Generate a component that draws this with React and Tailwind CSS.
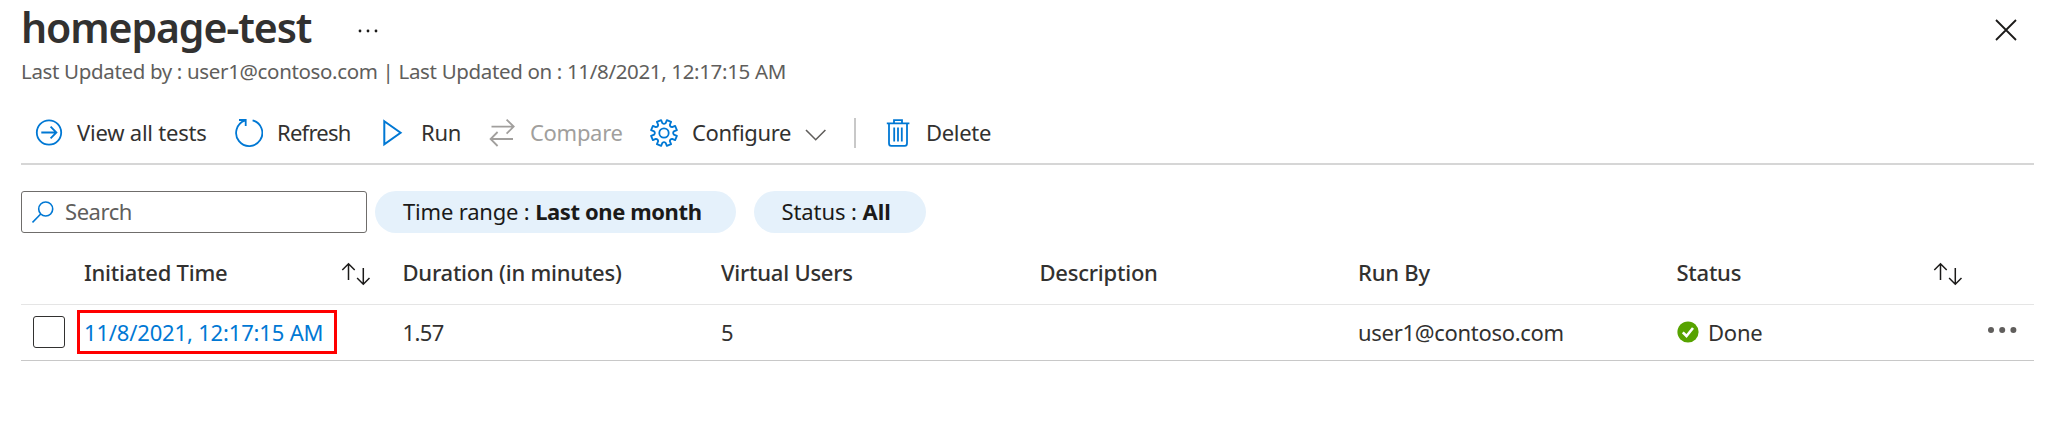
const blue = "#0078d4";

function Icon({ box, className = "", color = blue, width = 1.8, children }) {
  const [, , w, h] = box.split(" ");
  return (
    <svg
      viewBox={box}
      width={w}
      height={h}
      fill="none"
      stroke={color}
      strokeWidth={width}
      className={"block shrink-0 " + className}
      aria-hidden="true"
    >
      {children}
    </svg>
  );
}

function gearPath() {
  const pts = [];
  const n = 8;
  for (let i = 0; i < n; i++) {
    const c = (i * 360) / n + 22.5;
    [[-13, 10], [-10, 13.2], [10, 13.2], [13, 10]].forEach(([d, r]) => {
      const a = ((c + d) * Math.PI) / 180;
      pts.push([14 + r * Math.cos(a), 14 + r * Math.sin(a)]);
    });
  }
  let d = "M" + pts[0].map((v) => v.toFixed(2)).join(" ");
  for (let i = 0; i < n; i++) {
    const p = pts.slice(i * 4, i * 4 + 4).map((q) => q.map((v) => v.toFixed(2)).join(" "));
    if (i > 0) d += "A2.6 2.6 0 0 0 " + p[0];
    d += "L" + p[1] + "L" + p[2] + "L" + p[3];
  }
  return d + "A2.6 2.6 0 0 0 " + pts[0].map((v) => v.toFixed(2)).join(" ") + "Z";
}

function SortArrows({ className = "" }) {
  return (
    <Icon box="0 0 30 24" color="#1b1a19" width={1.5} className={className}>
      <path d="M7.5 18V1.8M1.3 8L7.5 1.8L13.7 8M22.3 6V22.2M16.1 16L22.3 22.2L28.5 16" />
    </Icon>
  );
}

function Command({ className, gap, text, textClass, children }) {
  return (
    <button className={"flex shrink-0 items-center text-left " + className}>
      {children}
      <span className={"mb-[2px] " + gap + " " + textClass}>{text}</span>
    </button>
  );
}

export default function App() {
  return (
    <main className="h-[446px] w-full overflow-hidden bg-white pr-[25px] pl-[21px] font-['Noto_Sans','Open_Sans',sans-serif] text-[22px] leading-[30px] font-normal whitespace-nowrap text-[#323130]">
      <header>
        <div className="flex h-[54px] items-center">
          <h1 className="w-[334px] text-[41px] leading-[54px] font-semibold tracking-[-1.1px]">homepage-test</h1>
          <Icon box="0 0 24 8" color="none" className="mt-[7px]">
            <g fill="#1b1a19">
              <circle cx="5" cy="4" r="1.4" />
              <circle cx="13" cy="4" r="1.4" />
              <circle cx="21" cy="4" r="1.4" />
            </g>
          </Icon>
          <Icon box="0 0 24 24" color="#1b1a19" width={1.8} className="mt-[6px] mr-[16px] ml-auto">
            <path d="M2 2L22 22M22 2L2 22" />
          </Icon>
        </div>
        <p className="h-[34px] text-[20.5px] leading-[34px] tracking-[-0.345px] text-[#605e5c]">
          Last Updated by : user1@contoso.com | Last Updated on : 11/8/2021, 12:17:15 AM
        </p>
      </header>

      <nav className="flex h-[77px] items-center border-b-2 border-[#d6d6d6] pt-[14px] pl-[14px]">
        <Command className="w-[200px]" gap="ml-[14px]" text="View all tests" textClass="tracking-[-0.22px]">
          <Icon box="0 0 28 28">
            <circle cx="14" cy="13.5" r="12.2" />
            <path d="M6.3 13.5H21.2M15.6 7.7L21.4 13.5L15.6 19.3" />
          </Icon>
        </Command>
        <Command className="w-[146px]" gap="ml-[14px]" text="Refresh" textClass="tracking-[-0.75px]">
          <Icon box="0 0 28 28">
            <path d="M17.6 1.3A13.1 13.1 0 1 1 9.6 1.7M4 1H10.7V6.9" />
          </Icon>
        </Command>
        <Command className="w-[107px]" gap="ml-[12px]" text="Run" textClass="tracking-[-0.3px]">
          <Icon box="0 0 28 28" width={2}>
            <path d="M3.3 2.2L19.6 13.8L3.3 25.4Z" />
          </Icon>
        </Command>
        <Command className="w-[162px] text-[#a19f9d]" gap="ml-[14px]" text="Compare" textClass="tracking-[-0.3px]">
          <Icon box="0 0 28 28" color="#a19f9d">
            <path d="M3.5 7.6H26M18.6 .6L25.7 7.6L18.6 14.6M25 20H2.4M9.6 13L2.6 20L9.6 27" />
          </Icon>
        </Command>
        <Command className="w-[154px]" gap="ml-[14px]" text="Configure" textClass="tracking-[-0.35px]">
          <Icon box="0 0 28 28">
            <path d={gearPath()} strokeLinejoin="round" />
            <circle cx="14" cy="14" r="4.7" />
          </Icon>
        </Command>
        <Icon box="0 0 24 14" color="#605e5c" width={1.6} className="mt-1">
          <path d="M2 2L11.7 11.7L21.4 2" />
        </Icon>
        <span className="ml-[26px] h-[30px] w-[2px] bg-[#c8c8c8]" />
        <Command className="ml-[28px]" gap="ml-[14px]" text="Delete" textClass="tracking-[-0.3px]">
          <Icon box="0 0 28 28">
            <path d="M2.8 4.3H25.4M5 4.3V24.2Q5 26.8 7.2 26.8H20.8Q23 26.8 23 24.2V4.3M10 4V1.2H18V4M10.2 8.5V22.5M14 8.5V22.5M17.8 8.5V22.5" />
          </Icon>
        </Command>
      </nav>

      <section className="mt-[26px] flex h-[42px] items-center">
        <div className="flex h-[42px] w-[346px] items-center rounded-[3px] border border-[#6f6d6b] pl-[10px]">
          <Icon box="0 0 22 22" width={1.6}>
            <circle cx="13.7" cy="8" r="7" />
            <path d="M8.7 13L.5 21.4" />
          </Icon>
          <span className="mb-[2px] ml-[11px] tracking-[-0.45px] text-[#605e5c]">Search</span>
        </div>
        <div className="ml-[8px] h-[42px] w-[361px] rounded-full bg-[#e5f1fb] pl-[28px] leading-[41px] text-[#1b1a19]">
          <span className="tracking-[-0.18px]">Time range : </span>
          <b className="tracking-[-0.4px]">Last one month</b>
        </div>
        <div className="ml-[18px] h-[42px] w-[172px] rounded-full bg-[#e5f1fb] pl-[27.5px] leading-[41px] text-[#1b1a19]">
          <span className="tracking-[-0.1px]">Status : </span>
          <b className="tracking-[0.1px]">All</b>
        </div>
      </section>

      <section>
        <div className="grid h-[72px] grid-cols-[63px_repeat(5,318.5px)_1fr] items-center border-b border-[#e5e5e5] pt-[6px] font-medium tracking-[-0.23px]">
          <span />
          <div className="flex items-center">
            <span>Initiated Time</span>
            <SortArrows className="mt-[4px] mr-[31.5px] ml-auto" />
          </div>
          <span>Duration (in minutes)</span>
          <span>Virtual Users</span>
          <span>Description</span>
          <span>Run By</span>
          <div className="flex items-center">
            <span>Status</span>
            <SortArrows className="mt-[4px] mr-[71px] ml-auto" />
          </div>
        </div>
        <div className="grid h-[56px] grid-cols-[56px_325.5px_repeat(4,318.5px)_1fr] items-center border-b border-[#c8c8c8] pb-[2px]">
          <span className="ml-[12px] h-8 w-8 rounded-[3px] border border-[#323130]" />
          <div className="flex h-[44px] w-[260px] items-center border-3 border-[#ff0000] pl-[4px] tracking-[-0.17px] text-[#0078d4]">
            11/8/2021, 12:17:15 AM
          </div>
          <span className="tracking-[-0.6px]">1.57</span>
          <span>5</span>
          <span />
          <span className="tracking-[-0.3px]">user1@contoso.com</span>
          <div className="flex items-center">
            <Icon box="0 0 22 22" color="white" width={2.6}>
              <circle cx="11" cy="11" r="10.6" fill="#57a300" stroke="none" />
              <path d="M5.8 11.3L9.5 15L16 7" />
            </Icon>
            <span className="ml-[9.5px] tracking-[-0.2px]">Done</span>
            <Icon box="0 0 30 8" color="none" className="mr-[17.5px] mb-[3px] ml-auto">
              <g fill="#605e5c">
                <circle cx="4" cy="4" r="3" />
                <circle cx="15.2" cy="4" r="3" />
                <circle cx="26.4" cy="4" r="3" />
              </g>
            </Icon>
          </div>
        </div>
      </section>
    </main>
  );
}
